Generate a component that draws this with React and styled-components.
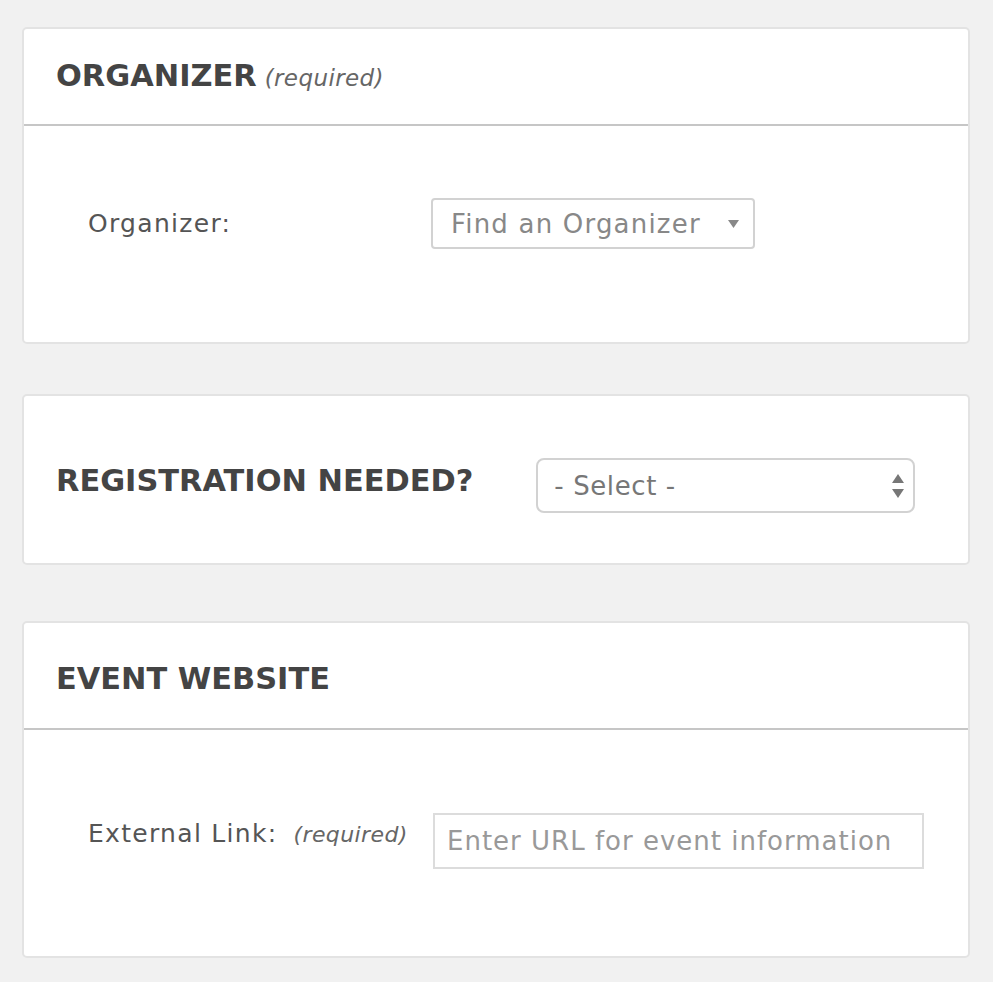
import React from 'react';
import styled, { createGlobalStyle } from 'styled-components';

const GlobalStyle = createGlobalStyle`
  html, body {
    margin: 0;
    padding: 0;
    background: #f1f1f1;
  }
  body {
    font-family: "DejaVu Sans", "Noto Sans", sans-serif;
    color: #555;
  }
  * {
    box-sizing: border-box;
  }
`;

const Page = styled.div`
  display: flex;
  flex-direction: column;
  gap: 50px;
  padding: 27px 23px 25px 22px;
`;

const Card = styled.section`
  background: #fff;
  border: 2px solid #e3e3e3;
  border-radius: 5px;
  margin-bottom: ${p => p.$after || 0}px;
`;

const CardHeader = styled.div`
  display: flex;
  align-items: baseline;
  gap: 8px;
  height: ${p => p.$height || 97}px;
  padding: ${p => p.$top || 30}px 32px 0;
  border-bottom: 2px solid #c6c6c6;
`;

const Title = styled.h2`
  margin: 0;
  font-size: 30.4px;
  font-weight: 700;
  color: #444;
  line-height: 34px;
`;

const InlineTitle = styled(Title)`
  margin-bottom: 10px;
`;

const Note = styled.span`
  font-style: italic;
  font-size: ${p => p.$size || 23}px;
  letter-spacing: 0.4px;
  color: #666;
  font-weight: 400;
`;

const CardBody = styled.div`
  padding: ${p => p.$pad};
`;

const InlineBody = styled.div`
  display: flex;
  align-items: center;
  gap: 63px;
  padding: 62px 32px 50px;
`;

const Row = styled.div`
  display: grid;
  grid-template-columns: ${p => p.$label}px auto;
  align-items: ${p => p.$align || 'center'};
`;

const Label = styled.label`
  display: flex;
  align-items: baseline;
  gap: 16px;
  padding-top: ${p => p.$top || 0}px;
  font-size: 25px;
  letter-spacing: 1.3px;
  color: #555;
`;

const SelectBox = styled.div`
  display: flex;
  align-items: center;
  justify-content: space-between;
  width: ${p => p.$width}px;
  height: ${p => p.$height}px;
  padding: 0 ${p => p.$padRight}px 0 ${p => p.$padLeft}px;
  border: 2px solid #d2d2d2;
  border-radius: ${p => (p.$rounded ? 8 : 4)}px;
  background: #fff;
  font-size: 26px;
  letter-spacing: ${p => p.$spacing}px;
  color: ${p => p.$color};
`;

const TextInput = styled.input`
  width: 491px;
  height: 56px;
  padding: 0 12px;
  border: 2px solid #dcdcdc;
  border-radius: 0;
  font-family: inherit;
  font-size: 26px;
  letter-spacing: 1px;
  color: #555;
  outline: none;

  &::placeholder {
    color: #999;
  }
`;

function CaretDown() {
  return (
    <svg width="11" height="8" viewBox="0 0 11 8">
      <path d="M0 0 H11 L5.5 8 Z" fill="#888" />
    </svg>
  );
}

function UpDown() {
  return (
    <svg width="12" height="26" viewBox="0 0 12 26">
      <path d="M0 10 L6 1 L12 10 Z" fill="#777" />
      <path d="M0 16 L6 25 L12 16 Z" fill="#777" />
    </svg>
  );
}

export default function App() {
  return (
    <>
      <GlobalStyle />
      <Page>
        <Card>
          <CardHeader>
            <Title>ORGANIZER</Title>
            <Note>(required)</Note>
          </CardHeader>
          <CardBody $pad="72px 64px 93px">
            <Row $label={343}>
              <Label>Organizer:</Label>
              <SelectBox $width={324} $height={51} $padLeft={18} $padRight={14} $spacing={1.2} $color="#888">
                <span>Find an Organizer</span>
                <CaretDown />
              </SelectBox>
            </Row>
          </CardBody>
        </Card>

        <Card $after={6}>
          <InlineBody>
            <InlineTitle>REGISTRATION NEEDED?</InlineTitle>
            <SelectBox $rounded $width={379} $height={55} $padLeft={16} $padRight={9} $spacing={0.6} $color="#777">
              <span>- Select -</span>
              <UpDown />
            </SelectBox>
          </InlineBody>
        </Card>

        <Card>
          <CardHeader $height={107} $top={39}>
            <Title>EVENT WEBSITE</Title>
          </CardHeader>
          <CardBody $pad="83px 64px 87px">
            <Row $label={345} $align="start">
              <Label $top={6}>
                External Link:
                <Note $size={22}>(required)</Note>
              </Label>
              <TextInput placeholder="Enter URL for event information" />
            </Row>
          </CardBody>
        </Card>
      </Page>
    </>
  );
}
